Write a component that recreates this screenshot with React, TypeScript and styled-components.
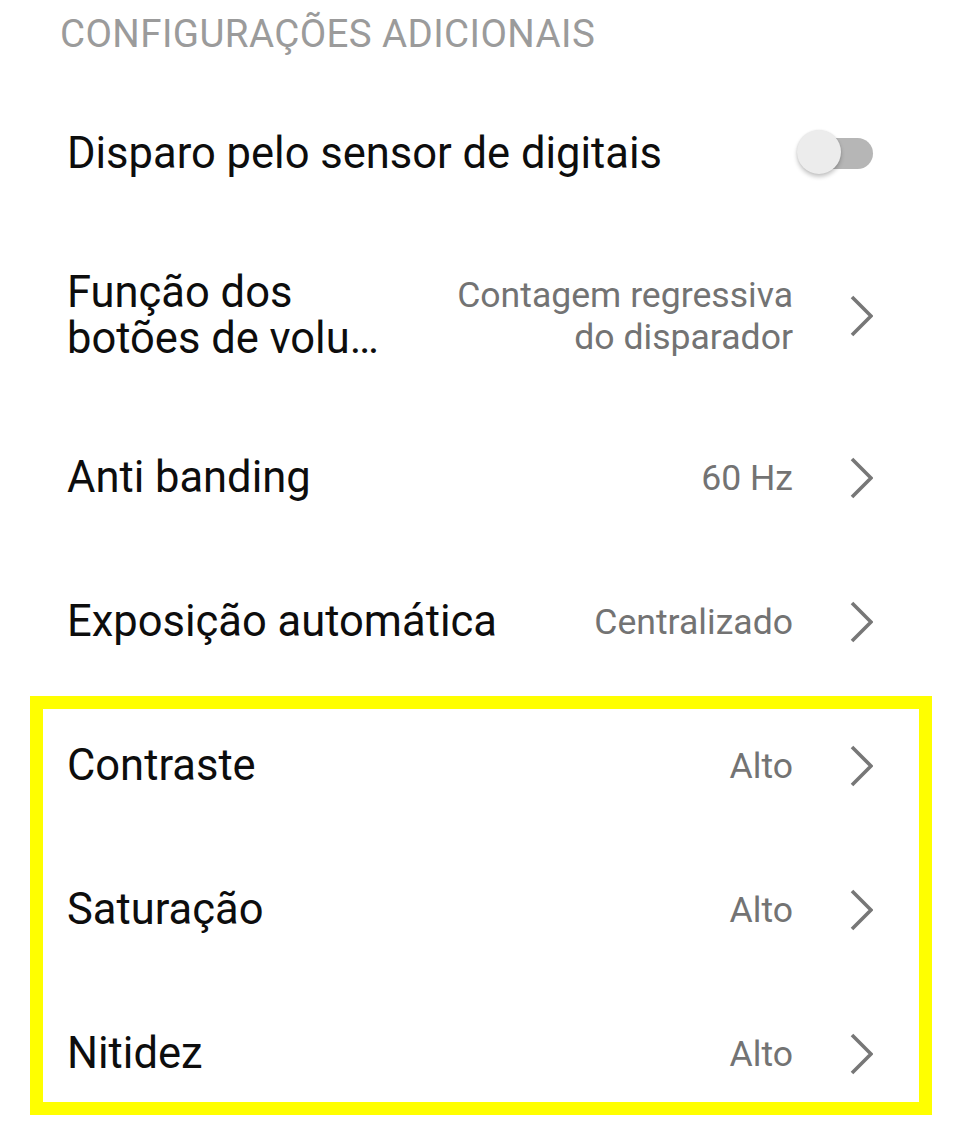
import React from "react";
import styled, { createGlobalStyle } from "styled-components";

const Global = createGlobalStyle`
  html, body { margin: 0; padding: 0; background: #ffffff; }
  body { font-family: Roboto, "Noto Sans", Arial, sans-serif; -webkit-font-smoothing: antialiased; }
`;

const Page = styled.div`
  width: 960px;
  height: 1136px;
  background: #ffffff;
  overflow: hidden;
  display: flex;
  flex-direction: column;
`;

const SectionHeader = styled.div`
  height: 80px;
  padding-left: 60px;
  box-sizing: border-box;
  display: flex;
  align-items: flex-start;
  padding-top: 11px;
  font-size: 38.5px;
  line-height: 46px;
  letter-spacing: 0.4px;
  color: #9b9b9b;
`;

const Row = styled.div<{ $tall?: boolean }>`
  min-height: ${(p) => (p.$tall ? 180 : 144)}px;
  box-sizing: border-box;
  padding: 3px 87px 0 67px;
  display: flex;
  align-items: center;
  gap: 24px;
`;

const Title = styled.div<{ $narrow?: boolean }>`
  flex: ${(p) => (p.$narrow ? "0 0 316px" : "1 1 auto")};
  min-width: 0;
  font-size: 43.5px;
  line-height: 46px;
  color: #0d0d0d;
  white-space: nowrap;
`;

const TitleLine = styled.div`
  white-space: nowrap;
  overflow: hidden;
  text-overflow: ellipsis;
`;

const Right = styled.div`
  margin-left: auto;
  display: flex;
  align-items: center;
  gap: 57px;
`;

const Value = styled.div`
  font-size: 35.6px;
  line-height: 42px;
  color: #737373;
  text-align: right;
  white-space: pre-line;
`;

const Chevron = styled.svg`
  width: 23px;
  height: 42px;
  flex: 0 0 auto;
  display: block;
`;

const SwitchTrack = styled.div`
  position: relative;
  width: 62px;
  height: 31px;
  border-radius: 16px;
  background: #b6b6b6;
  margin-left: auto;
`;

const SwitchThumb = styled.div`
  position: absolute;
  left: -14px;
  top: 50%;
  width: 44px;
  height: 44px;
  margin-top: -24px;
  border-radius: 50%;
  background: #ececec;
  box-shadow: 0 3px 4px rgba(0, 0, 0, 0.22), 0 0 2px rgba(0, 0, 0, 0.1);
`;

const Group = styled.div`
  position: relative;
`;

const HighlightBox = styled.div`
  position: absolute;
  left: 30px;
  top: 4px;
  width: 902px;
  height: 419px;
  box-sizing: border-box;
  border: 13px solid #ffff00;
  pointer-events: none;
`;

const Arrow = () => (
  <Chevron viewBox="0 0 23 42">
    <path d="M2 2 L21 21 L2 40" fill="none" stroke="#777777" strokeWidth="3.6" />
  </Chevron>
);

type Item = { title: string | string[]; value: string; tall?: boolean };

const NavRow = ({ title, value, tall }: Item) => (
  <Row $tall={tall}>
    <Title $narrow={Array.isArray(title)}>
      {Array.isArray(title)
        ? title.map((t) => <TitleLine key={t}>{t}</TitleLine>)
        : title}
    </Title>
    <Right>
      <Value>{value}</Value>
      <Arrow />
    </Right>
  </Row>
);

export default function App() {
  return (
    <Page>
      <Global />
      <SectionHeader>CONFIGURAÇÕES ADICIONAIS</SectionHeader>
      <Row>
        <Title>Disparo pelo sensor de digitais</Title>
        <SwitchTrack>
          <SwitchThumb />
        </SwitchTrack>
      </Row>
      <NavRow
        title={["Função dos", "botões de volume"]}
        value={"Contagem regressiva\ndo disparador"}
        tall
      />
      <NavRow title="Anti banding" value="60 Hz" />
      <NavRow title="Exposição automática" value="Centralizado" />
      <Group>
        <NavRow title="Contraste" value="Alto" />
        <NavRow title="Saturação" value="Alto" />
        <NavRow title="Nitidez" value="Alto" />
        <HighlightBox />
      </Group>
    </Page>
  );
}
